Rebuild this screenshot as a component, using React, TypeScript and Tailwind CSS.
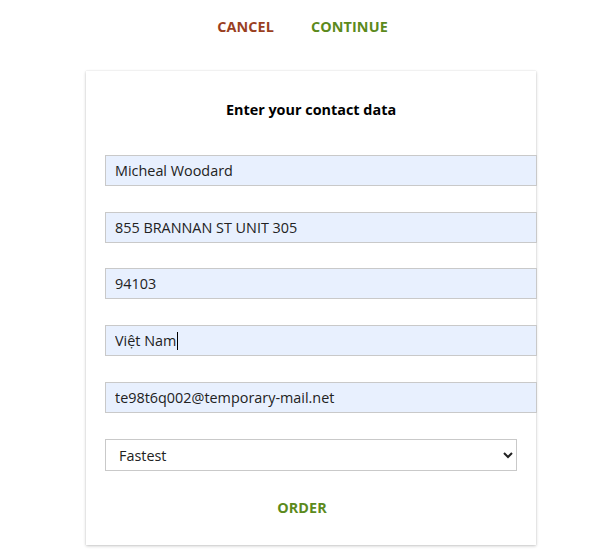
import React from "react";

const font = { fontFamily: '"Open Sans", "Noto Sans", sans-serif' };

function Field({ value, mt, caret }: { value: string; mt: string; caret?: boolean }) {
  return (
    <div className={`relative w-[432px] ${mt}`}>
      <input
        readOnly
        value={value}
        className="block w-[432px] h-[31px] border border-[#c9c9c9] bg-[#e8f0fe] px-[9px] text-[14.4px] text-[#222] outline-none"
        style={font}
      />
      {caret && <span className="absolute left-[72px] top-[7px] h-[18px] w-px bg-black" />}
    </div>
  );
}

export default function App() {
  return (
    <div className="min-h-[551px] w-[607px] bg-white" style={font}>
      <div className="flex h-[54px] items-center justify-center gap-[37px] pr-[2px]">
        <button className="text-[14.4px] font-bold tracking-[0.1px] text-[#9a3f1f]">CANCEL</button>
        <button className="text-[14.4px] font-bold tracking-[0.1px] text-[#5c8a1c]">CONTINUE</button>
      </div>
      <div className="ml-[86px] mt-[17px] w-[450px] bg-white px-[19px] pt-[29px] pb-[27px] shadow-[0_1px_3px_rgba(0,0,0,0.22),0_0_1px_rgba(0,0,0,0.12)]">
        <div className="text-center text-[14.4px] font-bold leading-[20px] text-black">Enter your contact data</div>
        <Field value="Micheal Woodard" mt="mt-[35px]" />
        <Field value="855 BRANNAN ST UNIT 305" mt="mt-[26px]" />
        <Field value="94103" mt="mt-[25px]" />
        <Field value="Việt Nam" mt="mt-[26px]" caret />
        <Field value="te98t6q002@temporary-mail.net" mt="mt-[26px]" />
        <select
          className="mt-[26px] block h-[32px] w-[412px] border border-[#c9c9c9] bg-white pl-[9px] pr-[6px] text-[14.4px] text-[#222]"
          style={font}
          defaultValue="Fastest"
        >
          <option>Fastest</option>
          <option>Standard</option>
        </select>
        <div className="mt-[27px] flex justify-center pr-[18px]">
          <button className="text-[14.4px] font-bold leading-[20px] tracking-[0.1px] text-[#5c8a1c]">ORDER</button>
        </div>
      </div>
    </div>
  );
}
